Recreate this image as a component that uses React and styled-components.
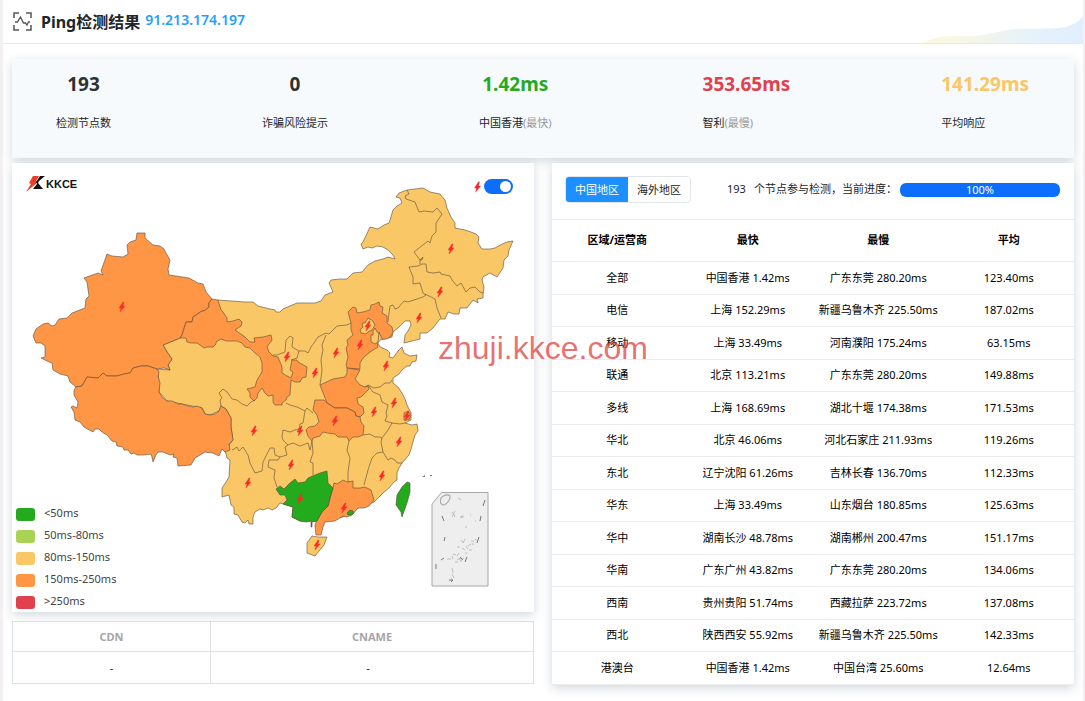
import React from "react";
import styled, { createGlobalStyle } from "styled-components";

const Global = createGlobalStyle`
  *, *::before, *::after { box-sizing: border-box; }
  body {
    margin: 0;
    background: #f2f0f1;
    color: #212529;
    font-family: "Noto Sans", "Noto Sans CJK SC", sans-serif;
    font-size: 11px;
    line-height: 16px;
  }
  button, input { font: inherit; }
`;

const shadow = "0 3px 10px rgba(30, 60, 80, 0.2)";
const colors = {
  green: "#24aa1d",
  lime: "#aad355",
  yellow: "#f9c765",
  orange: "#ff9645",
  red: "#e1414e",
};

const Page = styled.div`
  position: relative;
  min-height: 100vh;
  margin: 0 2px 0 3px;
  background: #fff;
`;

const Header = styled.header`
  display: flex;
  align-items: center;
  height: 44px;
  padding-left: 10px;
  border-bottom: 1px solid #e9e9e9;
`;

const Title = styled.h1`
  margin: 0 5px 0 9px;
  font-size: 16px;
  line-height: 24px;
  font-weight: 700;
`;

const Address = styled.a`
  padding-bottom: 4px;
  color: #1e9fff;
  font-size: 14px;
  line-height: 24px;
  font-weight: 600;
  text-decoration: none;
`;

const Wave = styled.svg`
  align-self: flex-end;
  margin-left: auto;
`;

const Content = styled.main`
  display: grid;
  gap: 5px;
  padding: 15px 9px 16px;
`;

const Stats = styled.section`
  display: flex;
  justify-content: space-between;
  height: 99px;
  padding: 11px 45px 0 44px;
  background: #f6fafd;
  box-shadow: ${shadow};
`;

const Stat = styled.div`
  text-align: ${(p) => p.$align || "center"};
`;

const StatValue = styled.div`
  color: ${(p) => p.$color || "#303133"};
  font-size: 19px;
  line-height: 28px;
  font-weight: 700;
`;

const StatLabel = styled.div`
  margin-top: 17px;
  small {
    color: #999;
    font-size: 11px;
  }
`;

const Columns = styled.div`
  display: grid;
  grid-template-columns: minmax(0, 1fr) minmax(0, 1fr);
  gap: 18px;
`;

const Column = styled.div`
  display: flex;
  flex-direction: column;
  gap: 9px;
`;

const MapPanel = styled.section`
  position: relative;
  background: #fff;
  box-shadow: ${shadow};
`;

const MapDrawing = styled.svg`
  display: block;
  width: 100%;
  height: auto;
`;

const Logo = styled.div`
  position: absolute;
  top: 13px;
  left: 14px;
  display: flex;
  align-items: center;
  color: #111;
  font: 700 11px/16px "Liberation Sans", sans-serif;
`;

const SwitchLabel = styled.label`
  position: absolute;
  top: 16px;
  right: 21px;
  display: flex;
  align-items: center;
  gap: 2px;
`;

const Switch = styled.input`
  appearance: none;
  width: 29px;
  height: 15px;
  margin: 0;
  border-radius: 8px;
  background: #0d6efd;
  display: flex;
  align-items: center;
  justify-content: flex-end;
  padding: 0 2px;
  &::after {
    content: "";
    width: 11px;
    height: 11px;
    border-radius: 50%;
    background: #fff;
  }
  &:not(:checked) {
    background: #bbb;
    justify-content: flex-start;
  }
`;

const Legend = styled.ul`
  position: absolute;
  left: 4px;
  bottom: 3px;
  display: grid;
  gap: 6px;
  margin: 0;
  padding: 0;
  list-style: none;
`;

const LegendItem = styled.li`
  display: flex;
  align-items: center;
  gap: 9px;
  color: #444;
  &::before {
    content: "";
    width: 19px;
    height: 13px;
    margin-top: 2px;
    border-radius: 3px;
    background: ${(p) => p.$color};
  }
`;

const CdnTable = styled.table`
  width: 100%;
  border-collapse: collapse;
  table-layout: fixed;
  text-align: center;
  th, td {
    padding: 0;
    border: 1px solid #dee2e6;
  }
  th {
    height: 30px;
    color: #a6a6a6;
    font-weight: 700;
  }
  td { height: 32px; }
  td:last-child { padding-right: 8px; }
  th:first-child { width: 38%; }
`;

const ResultPanel = styled.section`
  background: #fff;
  box-shadow: ${shadow};
`;

const Toolbar = styled.div`
  display: flex;
  align-items: center;
  height: 57px;
  padding: 0 14px 0 13px;
  border-bottom: 1px solid #ececec;
`;

const Tabs = styled.div`
  display: flex;
  height: 27px;
  margin-top: -3px;
  border: 1px solid #e2e5e9;
  border-radius: 4px;
  overflow: hidden;
`;

const Tab = styled.button`
  padding: 0 9px;
  border: 0;
  background: ${(p) => (p.$active ? "#1e8fff" : "#fff")};
  color: ${(p) => (p.$active ? "#fff" : "#212529")};
`;

const Summary = styled.span`
  margin: -4px 0 0 36px;
  white-space: nowrap;
  b {
    margin-right: 8px;
    font-weight: 400;
  }
`;

const Progress = styled.div`
  width: 160px;
  height: 14px;
  margin: -3px 0 0 auto;
  border-radius: 6px;
  background: #0d6efd;
  color: #fff;
  line-height: 13px;
  text-align: center;
`;

const ResultTable = styled.table`
  width: 100%;
  border-collapse: collapse;
  table-layout: fixed;
  color: #000;
  text-align: center;
  th, td {
    padding: 0;
    border-bottom: 1px solid #ececec;
    white-space: nowrap;
  }
  th {
    height: 41px;
    font-weight: 700;
  }
  tbody tr { height: 32px; }
  tbody tr:nth-child(odd) { height: 33px; }
`;

const Watermark = styled.div`
  position: absolute;
  top: 330px;
  left: 435px;
  color: rgba(221, 50, 50, 0.7);
  font: 32px/36px "Liberation Sans", sans-serif;
  pointer-events: none;
`;

const country =
  "M218 300L245 302 253 302 258 306 270 309 275 310 276 312 280 312 283 309 297 303 315 303 321 301 325 295 333 292 329 283 331 280 340 279 347 279 353 273 362 272 368 265 375 261 383 259 388 257 395 259 393 255 388 250 383 247 377 246 372 248 368 247 363 249 361 244 363 242 370 227 378 229 384 225 389 223 390 220 393 210 397 206 402 203 400 198 396 197 399 193 407 190 423 188 430 192 435 193 440 194 445 200 447 208 451 217 455 223 455 228 465 230 471 232 476 234 479 237 478 243 482 249 490 249 495 248 500 245 507 242 513 241 509 250 508 256 504 260 503 268 497 277 490 273 483 277 482 280 484 287 483 295 483 298 477 299 478 303 473 300 470 304 467 308 460 308 459 314 454 314 448 312 445 319 440 319 433 328 427 333 420 333 420 339 404 343 405 335 408 331 411 325 410 321 405 321 398 328 393 332 392 337 380 340 378 343 380 347 387 350 390 353 389 357 393 358 398 351 402 347 404 353 410 356 417 355 416 361 412 362 410 366 407 366 402 370 399 374 393 378 393 383 398 387 402 393 405 399 407 405 411 413 411 420 405 423 412 425 417 424 418 431 415 435 413 442 411 449 409 455 402 463 399 468 397 473 397 480 394 482 389 488 383 493 374 502 358 508 343 517 316 521 300 521 292 517 293 507 283 504 280 503 276 508 272 510 268 508 263 510 260 509 255 512 253 517 253 524 249 524 248 520 245 523 242 522 239 517 238 515 234 514 234 507 231 505 229 495 222 497 222 488 226 482 229 477 230 460 227 458 225 450 233 440 231 427 231 418 226 409 221 406 219 411 210 415 205 414 202 408 167 401 159 392 158 376 157 369 170 370 168 365 172 359 167 352 163 345 180 338Z";

const regions = [
  { name: "新疆", fill: colors.orange, d: "M137 233L145 233 145 238 153 245 160 246 164 249 166 253 170 260 168 269 169 275 189 278 198 283 203 284 206 292 212 299 209 303 209 307 204 311 202 311 193 317 192 322 186 322 182 335 180 338 163 345 167 352 172 359 168 365 170 370 164 368 157 369 148 366 141 366 133 368 130 373 124 374 117 376 107 376 103 373 98 378 87 377 82 386 76 387 70 382 68 376 60 374 53 370 52 363 47 361 45 360 41 358 45 357 45 346 41 343 36 343 33 336 36 329 43 324 48 323 52 326 55 325 59 319 67 318 72 313 85 308 86 299 89 296 87 282 84 278 98 273 103 275 101 271 107 254 112 256 123 257 128 254 127 245 130 242 136 240Z" },
  { name: "西藏", fill: colors.orange, d: "M76 387L82 386 87 377 98 378 103 373 107 376 117 376 124 374 130 373 133 368 141 366 148 366 157 369 159 372 158 376 160 383 159 392 163 398 167 401 172 401 178 404 182 404 188 406 193 407 197 406 202 408 205 414 210 415 215 414 219 411 221 406 226 409 231 418 231 427 233 440 229 444 230 450 225 452 222 449 219 456 213 453 205 452 195 458 191 465 178 466 177 458 173 457 174 454 170 455 163 452 158 452 156 455 153 462 152 457 151 454 144 455 137 455 134 453 131 454 128 450 124 450 123 447 117 446 116 442 112 441 107 435 102 432 99 429 95 429 93 432 84 427 80 422 75 420 74 412 71 407 73 406 77 408 78 402 74 395 74 390Z" },
  { name: "甘肃", fill: colors.orange, d: "M212 299L218 300 221 310 223 312 227 318 227 322 233 321 239 319 242 322 241 326 235 330 245 337 250 342 255 342 254 338 263 337 271 335 272 340 267 347 269 352 273 356 278 357 280 362 282 367 282 373 287 376 291 378 293 372 290 370 292 360 297 360 298 362 307 367 306 377 302 378 300 382 295 382 291 380 290 395 287 397 286 400 282 403 282 405 275 405 273 402 273 395 268 396 265 393 262 388 258 393 257 398 254 401 250 397 250 393 247 389 255 387 257 380 262 372 262 363 260 357 255 353 250 348 245 347 242 343 237 341 230 341 226 341 221 339 216 342 216 344 213 347 207 347 204 348 200 345 197 343 191 343 187 342 186 338 180 338 182 335 186 322 192 322 193 317 202 311 204 311 209 307 209 303Z" },
  { name: "河北", fill: colors.orange, d: "M351 323L348 312 353 307 356 308 357 313 363 312 370 310 371 305 375 304 379 302 380 306 383 307 382 313 387 316 387 323 392 327 393 332 391 336 387 339 382 339 379 332 377 343 378 347 370 352 363 358 360 363 360 369 347 368 346 365 348 357 346 348 348 345 347 340 353 335 351 330Z" },
  { name: "河南", fill: colors.orange, d: "M347 368L360 370 355 379 360 385 365 387 368 386 369 389 366 392 361 397 357 398 358 404 363 407 364 413 360 417 356 416 355 412 347 408 335 408 327 403 324 395 320 385 333 379 345 377 347 373Z" },
  { name: "湖北", fill: colors.orange, d: "M315 400L324 400 327 403 335 408 347 408 355 412 356 416 360 417 361 422 364 426 363 435 358 437 353 437 349 441 347 437 338 437 335 434 328 433 323 432 320 436 313 438 312 441 308 436 306 430 309 427 315 426 319 422 317 415 313 410Z" },
  { name: "广东", fill: colors.orange, d: "M343 480L347 482 353 481 353 488 360 488 365 487 371 490 374 500 369 506 364 508 358 508 352 515 347 517 343 516 335 521 325 522 323 527 321 535 316 535 315 525 317 520 322 512 328 506 330 498 333 488 334 483 337 484Z" },
  { name: "广西", fill: colors.green, d: "M327 471L328 483 333 488 330 498 328 506 322 512 317 521 312 522 312 527 311 527 311 521 306 522 300 521 292 517 293 507 283 504 287 500 285 495 280 495 276 489 280 486 284 489 290 483 295 479 298 483 305 482 308 478 315 475 320 473Z" },
  { name: "海南", fill: colors.yellow, d: "M312 536L318 537 327 537 324 545 315 556 307 553 307 543Z" },
  { name: "台湾", fill: colors.green, d: "M407 482L410 483 410 492 407 503 402 517 401 512 396 505 397 495 402 487Z" },
  { name: "上海", fill: colors.orange, d: "M404 413L408 411 411 415 409 420 404 420Z" },
  { name: "北京", fill: colors.yellow, d: "M365 323L368 318 373 321 375 325 372 330 368 332 366 334 361 333 360 330 363 327 362 323Z" },
  { name: "天津", fill: colors.yellow, d: "M373 331L375 328 377 332 379 333 378 342 375 344 371 342 371 335 373 335Z" },
  { name: "香港", fill: colors.green, d: "M347 513L350 510 353 511 354 513 351 515 348 515Z" },
];

const borders = [
  "M407 190L409 194 405 196 406 199 409 200 415 202 419 212 424 211 433 212 437 208 442 214 436 223 436 232 432 236 430 243 428 241 414 252 420 260 423 257 422 260 420 260 420 264",
  "M409 267L418 266 422 264 426 264 427 272 433 273 440 272 441 274 450 276 452 280 457 286 461 283 466 292 470 288 475 287 480 292 483 293",
  "M409 267L413 277 413 284 420 283 423 293 426 295",
  "M425 294L431 297 435 299 437 308 441 318",
  "M426 295L423 297 408 302 404 301 398 308 395 309 393 305 390 306 389 313 388 322",
  "M273 355L277 355 285 352 286 340 290 336 293 338 292 347 299 351 297 358 291 360",
  "M299 351L305 351 308 353 311 347 318 337 326 333",
  "M326 335L322 345 323 350 321 360 322 370 320 385",
  "M326 333L329 334 333 330 337 326 347 325 351 323",
  "M286 403L290 405 297 407 305 411 307 408 313 413",
  "M221 406L220 400 222 398 219 393 223 389 227 392 232 399 237 400 242 404 247 406 251 402 255 400",
  "M232 450L234 449 237 447 239 451 243 447 248 455 250 463 255 473 262 471 263 462 270 448 274 448 275 455 280 457",
  "M305 411L303 423 300 424 299 429 295 430 290 432 283 430 282 437 283 440 288 445 293 443 300 446 308 443 310 450 312 441",
  "M288 445L285 447 287 455 280 457 278 460 269 460 268 467 275 470 274 478 277 487",
  "M312 441L313 453 310 462 313 463 313 475",
  "M349 441L347 450 350 458 348 472 348 482",
  "M382 438L381 442 383 452 377 453 372 458 368 470 364 485",
  "M363 435L370 434 375 437 380 437 382 438 388 430 392 423 385 421 387 416 386 413 388 405 382 402 380 395 373 392 368 385 365 387",
  "M368 385L374 388 380 387 385 383 390 383 392 380",
  "M392 423L400 424 405 423",
  "M383 452L386 457 388 460 391 458 395 460 397 463 402 463",
];

const bolts = [
  [122, 307], [451, 249], [440, 292], [419, 318], [368, 326], [360, 345], [336, 353],
  [386, 366], [287, 357], [315, 373], [374, 412], [394, 403], [407, 416], [399, 442],
  [382, 476], [254, 431], [300, 431], [291, 465], [248, 483], [300, 499], [344, 508],
  [317, 545], [335, 421],
];

const dashes =
  "M485 500l-2 6M442 516l2 5M481 516l-1 5M445 537l-1 4M479 537l-2 6M436 564v5M467 557l-2 5M441 560l3-2M449 580h4l-2 2M460 557l3 3";
const specks =
  "M452 512l3 4m0-5l-3 6m2-1l1 1M460 517h4m-3 1l2-3M458 498l3 2M470 515h1M475 521h1M465 527h2M461 540l2 3m2-4l-2 4M457 547h3m2 1l3 2m1-4l2 3M471 541h3m-2 3h2M453 554l3 1m1 1l2-3M447 559h4m1-3l1 3M457 560l4-2m-1 3l4-3m-5 0l3 4M465 553h2m2-3h3M468 546l3-2M455 562h3M475 539l2 2M450 581l2-3M452 568l1 5M452 574l2 4";

const stats = [
  { value: "193", label: "检测节点数" },
  { value: "0", label: "诈骗风险提示" },
  { value: "1.42ms", label: "中国香港", note: "(最快)", color: colors.green },
  { value: "353.65ms", label: "智利", note: "(最慢)", color: colors.red, align: "left" },
  { value: "141.29ms", label: "平均响应", color: colors.yellow, align: "left" },
];

const legend = [
  ["<50ms", colors.green],
  ["50ms-80ms", colors.lime],
  ["80ms-150ms", colors.yellow],
  ["150ms-250ms", colors.orange],
  [">250ms", colors.red],
];

const rows = [
  ["全部", "中国香港 1.42ms", "广东东莞 280.20ms", "123.40ms"],
  ["电信", "上海 152.29ms", "新疆乌鲁木齐 225.50ms", "187.02ms"],
  ["移动", "上海 33.49ms", "河南濮阳 175.24ms", "63.15ms"],
  ["联通", "北京 113.21ms", "广东东莞 280.20ms", "149.88ms"],
  ["多线", "上海 168.69ms", "湖北十堰 174.38ms", "171.53ms"],
  ["华北", "北京 46.06ms", "河北石家庄 211.93ms", "119.26ms"],
  ["东北", "辽宁沈阳 61.26ms", "吉林长春 136.70ms", "112.33ms"],
  ["华东", "上海 33.49ms", "山东烟台 180.85ms", "125.63ms"],
  ["华中", "湖南长沙 48.78ms", "湖南郴州 200.47ms", "151.17ms"],
  ["华南", "广东广州 43.82ms", "广东东莞 280.20ms", "134.06ms"],
  ["西南", "贵州贵阳 51.74ms", "西藏拉萨 223.72ms", "137.08ms"],
  ["西北", "陕西西安 55.92ms", "新疆乌鲁木齐 225.50ms", "142.33ms"],
  ["港澳台", "中国香港 1.42ms", "中国台湾 25.60ms", "12.64ms"],
];

const boltPath = "M1-5L-3 1H-1L-2 5L3-1H1L2-5Z";

function ChinaMap() {
  return (
    <MapDrawing viewBox="12 163 522 449" role="img" aria-label="中国地区延迟地图">
      <g stroke="#5c4a38" strokeOpacity="0.6" strokeWidth="1" strokeLinejoin="round">
        <path d={country} fill={colors.yellow} />
        <path d={borders.join("")} fill="none" />
        {regions.map((r) => (
          <path key={r.name} d={r.d} fill={r.fill} />
        ))}
      </g>
      <g fill="#fb2c2c">
        {bolts.map(([x, y]) => (
          <path key={`${x}-${y}`} d={boltPath} transform={`translate(${x} ${y})`} stroke="#fb2c2c" strokeWidth="0.4" />
        ))}
      </g>
      <path d="M441.500 492.500H488V586H432V504Z" fill="#eee" stroke="#a8a8a8" />
      <path d="M441 498C443 495 448 494 450 496C451 499 447 504 444 505C440 505 440 501 441 498Z" fill="none" stroke="#aaa" strokeWidth="1.200" />
      <path d={dashes} fill="none" stroke="#777" />
      <path d={specks} fill="none" stroke="#aaa" strokeWidth="0.700" />
      <path d="M422 477l3-2v2zM430 475h2v1h-2z" fill="#777" />
    </MapDrawing>
  );
}

export default function App() {
  return (
    <>
      <Global />
      <Page>
        <Header>
          <svg width="19" height="19" viewBox="0 0 19 19" fill="none" stroke="#555" strokeWidth="1.500" aria-hidden="true">
            <path d="M1 6V1H6M13 1H18V6M18 13V18H13M6 18H1V13" />
            <path d="M2 10H4.500L7.500 5L10.500 11H12.500L14 13L15.500 10H17" strokeWidth="1.300" />
          </svg>
          <Title>Ping检测结果</Title>
          <Address href="#ip">91.213.174.197</Address>
          <Wave width="162" height="28" viewBox="0 0 162 28" aria-hidden="true">
            <defs>
              <linearGradient id="wave">
                <stop offset="0" stopColor="#fef6dc" />
                <stop offset="0.300" stopColor="#f6f6e8" />
                <stop offset="0.700" stopColor="#e5f1fb" />
                <stop offset="1" stopColor="#e1eefe" />
              </linearGradient>
            </defs>
            <path d="M0 28C18 20 28 21 46 21C70 21 76 15 97 14C117 13 135 15 148 11C156 8 159 5 162 1V28Z" fill="url(#wave)" />
          </Wave>
        </Header>
        <Content>
          <Stats>
            {stats.map((s) => (
              <Stat key={s.label} $align={s.align}>
                <StatValue $color={s.color}>{s.value}</StatValue>
                <StatLabel>
                  {s.label}
                  {s.note && <small>{s.note}</small>}
                </StatLabel>
              </Stat>
            ))}
          </Stats>
          <Columns>
            <Column>
              <MapPanel>
                <ChinaMap />
                <Logo>
                  <svg width="20" height="16" viewBox="0 0 20 16" aria-hidden="true">
                    <path d="M7 0H13L10 5L12 6L0 16L5 8L3 7Z" fill="#f03c24" />
                    <path d="M14 0H19L13 5L12 7L17 13H7L11 8L10 6Z" fill="#111" />
                  </svg>
                  KKCE
                </Logo>
                <SwitchLabel>
                  <svg width="9" height="14" viewBox="-4 -6 8 12" aria-hidden="true">
                    <path d={boltPath} fill="#f5222d" />
                  </svg>
                  <Switch type="checkbox" defaultChecked aria-label="显示节点标记" />
                </SwitchLabel>
                <Legend>
                  {legend.map(([text, color]) => (
                    <LegendItem key={text} $color={color}>{text}</LegendItem>
                  ))}
                </Legend>
              </MapPanel>
              <CdnTable>
                <thead>
                  <tr><th>CDN</th><th>CNAME</th></tr>
                </thead>
                <tbody>
                  <tr><td>-</td><td>-</td></tr>
                </tbody>
              </CdnTable>
            </Column>
            <ResultPanel>
              <Toolbar>
                <Tabs>
                  <Tab type="button" $active>中国地区</Tab>
                  <Tab type="button">海外地区</Tab>
                </Tabs>
                <Summary><b>193</b>个节点参与检测，当前进度：</Summary>
                <Progress role="progressbar" aria-valuenow={100} aria-label="检测进度">100%</Progress>
              </Toolbar>
              <ResultTable>
                <thead>
                  <tr><th>区域/运营商</th><th>最快</th><th>最慢</th><th>平均</th></tr>
                </thead>
                <tbody>
                  {rows.map((row) => (
                    <tr key={row[0]}>
                      {row.map((cell, i) => <td key={i}>{cell}</td>)}
                    </tr>
                  ))}
                </tbody>
              </ResultTable>
            </ResultPanel>
          </Columns>
        </Content>
        <Watermark>zhuji.kkce.com</Watermark>
      </Page>
    </>
  );
}
